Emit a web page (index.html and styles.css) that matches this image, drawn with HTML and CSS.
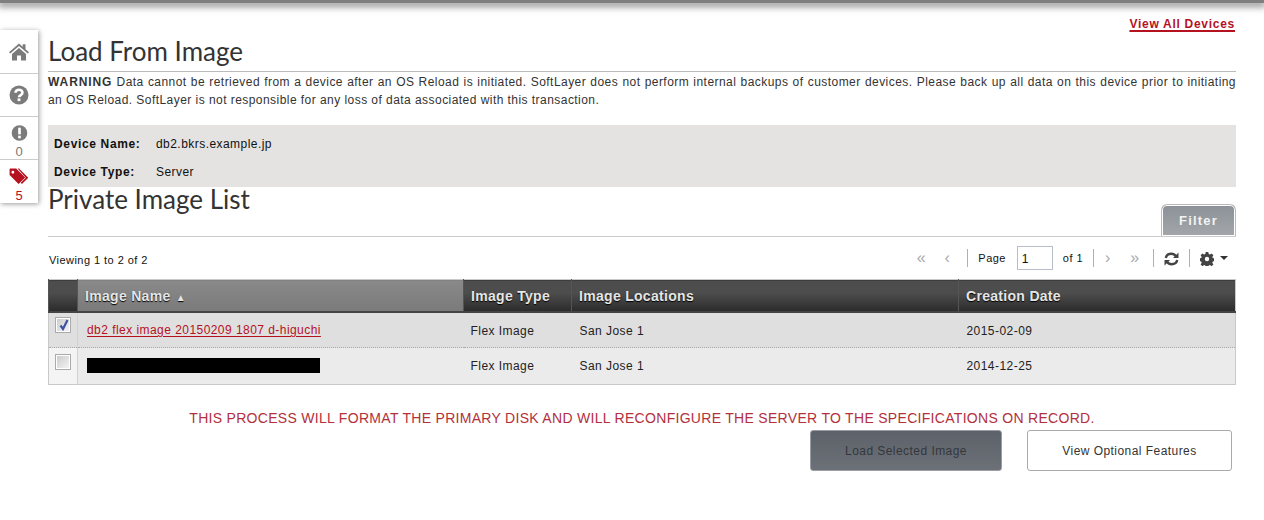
FILE: index.html
```html
<!DOCTYPE html>
<html lang="en">
<head>
<meta charset="utf-8">
<title>Load From Image</title>
<link rel="stylesheet" href="styles.css">
</head>
<body>
<div class="topbar"></div>
<div class="page">
  <nav class="rail">
    <div class="rail-item tall">
      <svg class="ico" width="20" height="18" viewBox="0 0 20 18"><path fill="#7b7b7b" d="M10 .5 0 9.3l1.2 1.3L10 3l8.800 7.600L20 9.300l-3.500-3V1.200h-2.800v2.600zM3 11v6.500h5v-5h4v5h5V11l-7-6z"/></svg>
    </div>
    <div class="rail-item tall">
      <svg class="ico" width="20" height="20" viewBox="0 0 20 20"><circle cx="10" cy="10" r="9.500" fill="#7b7b7b"/><path fill="none" stroke="#fff" stroke-width="2.600" d="M6.500 7.800C6.500 5.800 8 4.700 10 4.700s3.500 1.200 3.500 2.900c0 2.500-3.500 2.400-3.500 4.700"/><rect x="8.600" y="13.400" width="2.800" height="2.700" fill="#fff"/></svg>
    </div>
    <div class="rail-item count">
      <svg class="ico" width="17" height="17" viewBox="0 0 18 18"><circle cx="9" cy="9" r="8.800" fill="#7b7b7b"/><rect x="7.500" y="3" width="3" height="7.500" fill="#fff"/><rect x="7.500" y="12" width="3" height="3" fill="#fff"/></svg>
      <span class="num">0</span>
    </div>
    <div class="rail-item count last">
      <svg class="ico tag" width="21" height="17" viewBox="0 0 21 18"><path fill="#b5121f" d="M0 1v6.500l9.500 9.500 7-7L7 .5H.5zm3.500 2a1.500 1.500 0 1 1 0 3 1.500 1.500 0 0 1 0-3z"/><path fill="#b5121f" d="m10 .5 9.800 9.800-6.700 6.700-1.300-1.300 5.400-5.400L8.500.5z"/></svg>
      <span class="num red">5</span>
    </div>
  </nav>
  <main class="main">
    <div class="toplink"><a href="#">View All Devices</a></div>
    <h1 class="title">Load From Image</h1>
    <p class="warning"><b>WARNING</b> Data cannot be retrieved from a device after an OS Reload is initiated. SoftLayer does not perform internal backups of customer devices. Please back up all data on this device prior to initiating an OS Reload. SoftLayer is not responsible for any loss of data associated with this transaction.</p>
    <div class="device">
      <div class="device-row"><b class="label">Device Name:</b><span>db2.bkrs.example.jp</span></div>
      <div class="device-row"><b class="label">Device Type:</b><span>Server</span></div>
    </div>
    <div class="list-head">
      <h2 class="subtitle">Private Image List</h2>
      <div class="filter">Filter</div>
    </div>
    <div class="toolbar">
      <span class="viewing">Viewing 1 to 2 of 2</span>
      <div class="pager">
        <span class="arrow a-first">«</span><span class="arrow a-prev">‹</span>
        <span class="sep"></span>
        <span>Page</span><input class="page-input" value="1"><span>of 1</span>
        <span class="sep"></span>
        <span class="arrow a-next">›</span><span class="arrow a-last">»</span>
        <span class="sep"></span>
        <svg class="tool" width="15" height="14" viewBox="0 0 15 14"><path fill="none" stroke="#444" stroke-width="2.400" d="M1.800 6C2.300 3.500 4.500 1.800 7.300 1.800c2 0 3.600.8 4.700 2.400M13.200 8c-.5 2.500-2.700 4.200-5.500 4.200-2 0-3.600-.8-4.700-2.400"/><path fill="#444" d="M14.500.5v5.500H9zM.5 13.500V8H6z"/></svg>
        <span class="sep"></span>
        <svg class="tool" width="14" height="14" viewBox="0 0 14 14"><path fill="#444" d="M5.700 0h2.600l.4 2 1.200.5L11.600 1.400l1.800 1.800-1.100 1.700.5 1.200 2 .4v2.600l-2 .4-.5 1.200 1.100 1.700-1.800 1.800-1.700-1.100-1.200.5-.4 2H5.700l-.4-2-1.200-.5-1.700 1.100-1.800-1.800 1.100-1.700-.5-1.200-2-.4V6.500l2-.4.500-1.200-1.100-1.700 1.800-1.800 1.700 1.100 1.200-.5zM7 4.800a2.200 2.200 0 1 0 0 4.400 2.200 2.200 0 0 0 0-4.400z"/></svg>
        <span class="caret"></span>
      </div>
    </div>
    <table class="grid">
      <thead>
        <tr>
          <th class="c-check"></th>
          <th class="c-name sorted">Image Name <span class="sort">▲</span></th>
          <th class="c-type">Image Type</th>
          <th class="c-loc">Image Locations</th>
          <th>Creation Date</th>
        </tr>
      </thead>
      <tbody>
        <tr class="odd">
          <td class="cell-check"><span class="check on"><svg width="12" height="12" viewBox="0 0 12 12"><path fill="none" stroke="#3f51a5" stroke-width="2.200" d="M2.500 6.500 5 10l4.500-9"/></svg></span></td>
          <td class="cell-name"><a href="#">db2 flex image 20150209 1807 d-higuchi</a></td>
          <td>Flex Image</td>
          <td>San Jose 1</td>
          <td>2015-02-09</td>
        </tr>
        <tr class="even">
          <td class="cell-check"><span class="check"></span></td>
          <td class="cell-name"><span class="redact"></span></td>
          <td>Flex Image</td>
          <td>San Jose 1</td>
          <td>2014-12-25</td>
        </tr>
      </tbody>
    </table>
    <p class="notice">THIS PROCESS WILL FORMAT THE PRIMARY DISK AND WILL RECONFIGURE THE SERVER TO THE SPECIFICATIONS ON RECORD.</p>
    <div class="actions">
      <button class="btn disabled" type="button">Load Selected Image</button>
      <button class="btn" type="button">View Optional Features</button>
    </div>
  </main>
</div>
</body>
</html>
```

FILE: styles.css
```css
* { box-sizing: border-box; }
html, body { margin: 0; padding: 0; background: #fff; }
body {
  font-family: "Liberation Sans", Arial, sans-serif;
  font-size: 12px;
  letter-spacing: .45px;
  color: #333;
  height: 520px;
  overflow: hidden;
}
a { color: #b5121f; text-underline-offset: 2px; }
b { letter-spacing: .65px; }
.topbar {
  height: 3px;
  background: #7f7f7f;
  box-shadow: 0 2px 7px 2px rgba(60,60,60,.55);
}
.page { display: flex; align-items: flex-start; }
.rail {
  width: 38px;
  margin-top: 27px;
  background: #fff;
  box-shadow: 1px 1px 5px rgba(0,0,0,.4);
  flex: none;
}
.rail-item {
  display: flex;
  flex-direction: column;
  align-items: center;
  border-bottom: 1px solid #ccc;
}
.rail-item.tall { height: 43px; justify-content: center; }
.rail-item:first-child { height: 44px; }
.rail-item.count { height: 43px; padding-top: 8px; }
.rail-item.last { border-bottom: 0; height: 43px; }
.tag { margin-left: 1px; }
.num { font-size: 13px; line-height: 15px; color: #777; margin-top: 3px; letter-spacing: 0; }
.num.red { color: #b5121f; }
.main { width: 1188px; margin-left: 10px; flex: none; }
.toplink {
  height: 29px;
  padding-top: 13px;
  text-align: right;
  font-weight: bold;
  line-height: 17px;
  padding-right: 1px;
  letter-spacing: .72px;
}
.toplink a { text-decoration-thickness: 2px; }
.title {
  margin: 0;
  height: 40px;
  font: 400 26px/38px Lato, sans-serif;
  letter-spacing: 0;
  color: #333;
  border-bottom: 1px solid #bbb;
}
.warning {
  margin: 0;
  padding-top: 1px;
  line-height: 18px;
  height: 53px;
  text-align: justify;
}
.warning b { letter-spacing: .9px; }
.device {
  background: #e4e3e1;
  height: 62px;
  padding-left: 6px;
  color: #111;
}
.device-row { display: flex; align-items: center; padding-top: 9px; box-sizing: content-box; height: 19px; }
.label { width: 102px; }
.list-head { display: flex; justify-content: space-between; align-items: flex-end; height: 50px; border-bottom: 1px solid #ccc; }
.subtitle {
  margin: 0;
  align-self: flex-start;
  font: 400 26px/25px Lato, sans-serif;
  letter-spacing: 0;
  color: #333;
}
.filter {
  width: 75px;
  height: 32px;
  background: linear-gradient(#8b9197, #a3a7ab);
  border: 1px solid #bbb;
  border-bottom: 0;
  border-radius: 6px 6px 0 0;
  box-shadow: inset 0 0 0 1px #fff;
  color: #f2f2f2;
  font: bold 13px/31px "Liberation Sans", sans-serif;
  letter-spacing: 1.200px;
  text-align: center;
}
.toolbar { display: flex; justify-content: space-between; align-items: center; height: 42px; }
.viewing { font-size: 11px; padding: 4px 0 0 1px; color: #111; }
.pager { display: flex; align-items: center; font-size: 11px; color: #111; padding-right: 8px; }
.tool { margin-top: 2px; }
.arrow { text-align: center; color: #aaa; font-size: 16px; line-height: 18px; }
.a-first { width: 16px; margin-right: 8px; }
.a-prev { width: 20px; }
.a-next { width: 8px; }
.a-last { width: 16px; margin-left: 15px; }
.sep { width: 1px; height: 18px; background: #b5b0a5; margin: 0 10px; }
.page-input {
  width: 36px;
  height: 24px;
  margin: 0 10px 0 11px;
  border: 1px solid #b9bcc9;
  padding: 2px 4px 0;
  font: 12px "Liberation Sans", sans-serif;
  color: #111;
}
.caret {
  width: 0;
  height: 0;
  margin-left: 6px;
  border: 4px solid transparent;
  border-top-color: #333;
  border-bottom: 0;
}
.grid {
  width: 100%;
  border-collapse: collapse;
  table-layout: fixed;
  border: 1px solid #c9c9c9;
}
.grid th {
  height: 32px;
  padding: 2px 0 0 7px;
  text-align: left;
  font-size: 14px;
  color: #e6e6e6;
  letter-spacing: .3px;
  text-shadow: 0 1px 1px #000;
  background: linear-gradient(#4d4d4d 0, #4d4d4d 40%, #2b2b2b 100%);
  border-left: 1px solid #555;
  border-bottom: 2px solid #444;
}
.grid .c-check { width: 29px; }
.grid .c-name { width: 386px; }
.grid .c-type { width: 108px; }
.grid .c-loc { width: 387px; }
.grid th.sorted { background: linear-gradient(#8a8a8a, #7a7a7a); }
.sort { font-size: 10px; margin-left: 1px; }
.grid td {
  height: 36px;
  padding: 0 0 0 7px;
  color: #222;
  border-bottom: 1px dotted #aaa;
}
.grid .odd td { padding-top: 2px; }
.grid .even td { border-bottom: 0; height: 37px; padding-bottom: 1px; }
.grid td:nth-child(n+4) { padding-left: 8px; }
.odd { background: #dfdfdf; }
.even { background: #ebebeb; }
.grid .cell-check { padding: 0 0 8px 6px; border-right: 1px solid #d2d2d2; }
.grid .odd .cell-check { padding: 0 0 10px 6px; }
.grid .even .cell-check { padding: 0 0 8px 6px; background: #f4f4f4; }
.grid .cell-name { padding-left: 9px; padding-bottom: 2px; }
.grid .even .cell-name { padding-bottom: 1px; }
.check {
  display: block;
  width: 16px;
  height: 16px;
  border: 1px solid #aaa;
  background: linear-gradient(135deg, #c9c9c9, #f6f6f6);
  box-shadow: inset 0 0 0 1px #fff;
  padding: 1px 0 0 2px;
}
.check.on svg { display: block; }
.redact { display: block; width: 233px; height: 15px; background: #000; }
.notice {
  margin: 0;
  height: 27px;
  padding-top: 23px;
  box-sizing: content-box;
  text-align: center;
  font-size: 14px;
  line-height: 20px;
  letter-spacing: .3px;
  color: #b3303c;
}
.actions { display: flex; justify-content: flex-end; gap: 25px; padding-right: 4px; margin-top: -5px; }
.btn {
  height: 41px;
  font: 12px "Liberation Sans", sans-serif;
  letter-spacing: .45px;
  color: #333;
  background: #fff;
  border: 1px solid #aaa;
  border-radius: 3px;
  width: 205px;
}
.btn.disabled { width: 192px; background: linear-gradient(#5d626a, #6c7178); border-color: #9a9da3; color: #33373c; }
```
